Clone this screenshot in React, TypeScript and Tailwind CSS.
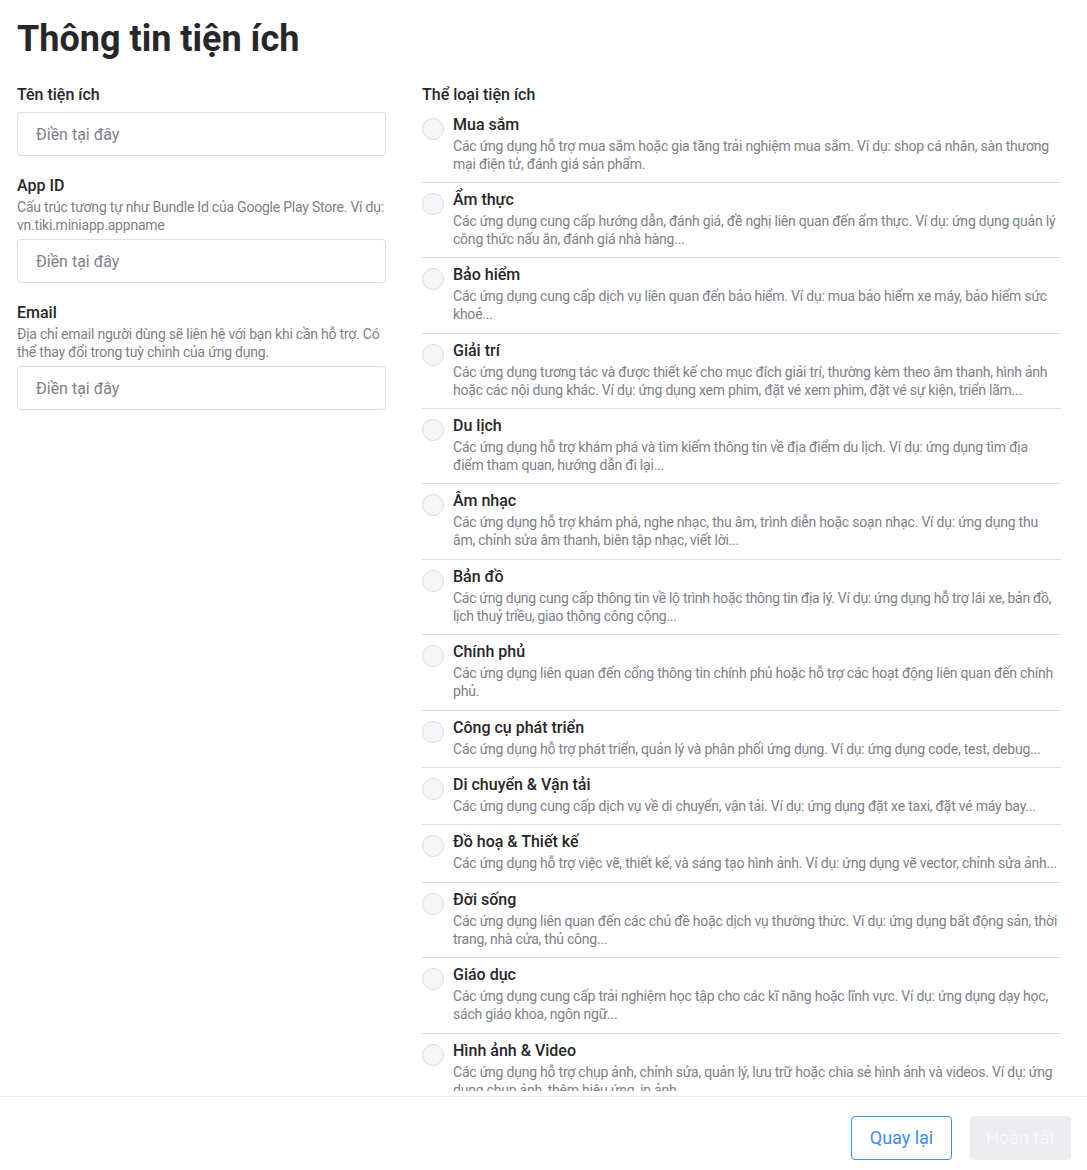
import React from "react";

const categories: { title: string; desc: string; tight?: boolean }[] = [
  { title: "Mua sắm", desc: "Các ứng dụng hỗ trợ mua sắm hoặc gia tăng trải nghiệm mua sắm. Ví dụ: shop cá nhân, sàn thương mại điện tử, đánh giá sản phẩm." },
  { title: "Ẩm thực", desc: "Các ứng dụng cung cấp hướng dẫn, đánh giá, đề nghị liên quan đến ẩm thực. Ví dụ: ứng dụng quản lý công thức nấu ăn, đánh giá nhà hàng..." },
  { title: "Bảo hiểm", desc: "Các ứng dụng cung cấp dịch vụ liên quan đến bảo hiểm. Ví dụ: mua bảo hiểm xe máy, bảo hiểm sức khoẻ..." },
  { title: "Giải trí", desc: "Các ứng dụng tương tác và được thiết kế cho mục đích giải trí, thường kèm theo âm thanh, hình ảnh hoặc các nội dung khác. Ví dụ: ứng dụng xem phim, đặt vé xem phim, đặt vé sự kiện, triển lãm..." },
  { title: "Du lịch", desc: "Các ứng dụng hỗ trợ khám phá và tìm kiếm thông tin về địa điểm du lịch. Ví dụ: ứng dụng tìm địa điểm tham quan, hướng dẫn đi lại..." },
  { title: "Âm nhạc", desc: "Các ứng dụng hỗ trợ khám phá, nghe nhạc, thu âm, trình diễn hoặc soạn nhạc. Ví dụ: ứng dụng thu âm, chỉnh sửa âm thanh, biên tập nhạc, viết lời..." },
  { title: "Bản đồ", desc: "Các ứng dụng cung cấp thông tin về lộ trình hoặc thông tin địa lý. Ví dụ: ứng dụng hỗ trợ lái xe, bản đồ, lịch thuỷ triều, giao thông công cộng...", tight: true },
  { title: "Chính phủ", desc: "Các ứng dụng liên quan đến cổng thông tin chính phủ hoặc hỗ trợ các hoạt động liên quan đến chính phủ." },
  { title: "Công cụ phát triển", desc: "Các ứng dụng hỗ trợ phát triển, quản lý và phân phối ứng dụng. Ví dụ: ứng dụng code, test, debug..." },
  { title: "Di chuyển & Vận tải", desc: "Các ứng dụng cung cấp dịch vụ về di chuyển, vận tải. Ví dụ: ứng dụng đặt xe taxi, đặt vé máy bay..." },
  { title: "Đồ hoạ & Thiết kế", desc: "Các ứng dụng hỗ trợ việc vẽ, thiết kế, và sáng tạo hình ảnh. Ví dụ: ứng dụng vẽ vector, chỉnh sửa ảnh..." },
  { title: "Đời sống", desc: "Các ứng dụng liên quan đến các chủ đề hoặc dịch vụ thường thức. Ví dụ: ứng dụng bất động sản, thời trang, nhà cửa, thủ công..." },
  { title: "Giáo dục", desc: "Các ứng dụng cung cấp trải nghiệm học tập cho các kĩ năng hoặc lĩnh vực. Ví dụ: ứng dụng dạy học, sách giáo khoa, ngôn ngữ..." },
  { title: "Hình ảnh & Video", desc: "Các ứng dụng hỗ trợ chụp ảnh, chỉnh sửa, quản lý, lưu trữ hoặc chia sẻ hình ảnh và videos. Ví dụ: ứng dụng chụp ảnh, thêm hiệu ứng, in ảnh..." },
];

function Field({ label, desc }: { label: string; desc?: string }) {
  return (
    <div className="flex flex-col">
      <div className="text-[16px] leading-[22px] font-medium text-[#27272a]">{label}</div>
      {desc && <div className="mt-[1px] text-[14px] leading-[18px] tracking-[-0.22px] text-[#808089]">{desc}</div>}
      <div className={desc ? "mt-[5px]" : "mt-[6px]"}>
        <input
          placeholder="Điền tại đây"
          className="h-[44px] w-full rounded-[4px] border border-[#dddde3] bg-white px-[18px] text-[16px] text-[#27272a] placeholder:text-[#808089] outline-none"
        />
      </div>
    </div>
  );
}

export default function App() {
  return (
    <div className="flex h-[1170px] w-full flex-col bg-white font-['Roboto',sans-serif] text-[#27272a]">
      <div className="mb-[5px] flex-1 overflow-hidden px-[17px] pt-[17px]">
        <h1 className="text-[36px] leading-[44px] font-bold text-[#27272a]">Thông tin tiện ích</h1>
        <div className="mt-[23px] flex gap-[36px]">
          <div className="flex w-[369px] flex-col gap-[19px]">
            <Field label="Tên tiện ích" />
            <Field label="App ID" desc="Cấu trúc tương tự như Bundle Id của Google Play Store. Ví dụ: vn.tiki.miniapp.appname" />
            <Field label="Email" desc="Địa chỉ email người dùng sẽ liên hệ với bạn khi cần hỗ trợ. Có thể thay đổi trong tuỳ chỉnh của ứng dụng." />
          </div>
          <div className="flex w-[639px] flex-col">
            <div className="text-[16px] leading-[22px] font-medium text-[#27272a]">Thể loại tiện ích</div>
            <div className="mt-[1.5px] flex flex-col">
              {categories.map((c) => (
                <label key={c.title} className="flex gap-[9px] border-b border-[#dddde3] pt-[5px] pb-[9.4px] pr-[3px]">
                  <span className="mt-[5px] h-[22px] w-[22px] shrink-0 rounded-full border border-[#dddde3] bg-[#f5f5fa]" />
                  <span className="flex min-w-0 flex-1 flex-col">
                    <span className="text-[16px] leading-[24px] font-medium text-[#27272a]">{c.title}</span>
                    <span
                      className={
                        c.tight
                          ? "text-[14px] leading-[18px] tracking-[-0.3px] text-[#808089]"
                          : "text-[14px] leading-[18px] tracking-[-0.22px] text-[#808089]"
                      }
                    >
                      {c.desc}
                    </span>
                  </span>
                </label>
              ))}
            </div>
          </div>
        </div>
      </div>
      <div className="flex h-[74px] shrink-0 justify-end gap-[18px] border-t border-[#ebebf0] px-[16px] pt-[19px]">
        <button className="h-[44px] w-[101px] rounded-[4px] border border-[#3a8ef0] bg-white text-[18px] leading-[22px] text-[#3a8ef0]">Quay lại</button>
        <button className="h-[44px] w-[101px] rounded-[4px] bg-[#ebebf0] text-[18px] leading-[22px] text-[#f8f8fa]">Hoàn tất</button>
      </div>
    </div>
  );
}
